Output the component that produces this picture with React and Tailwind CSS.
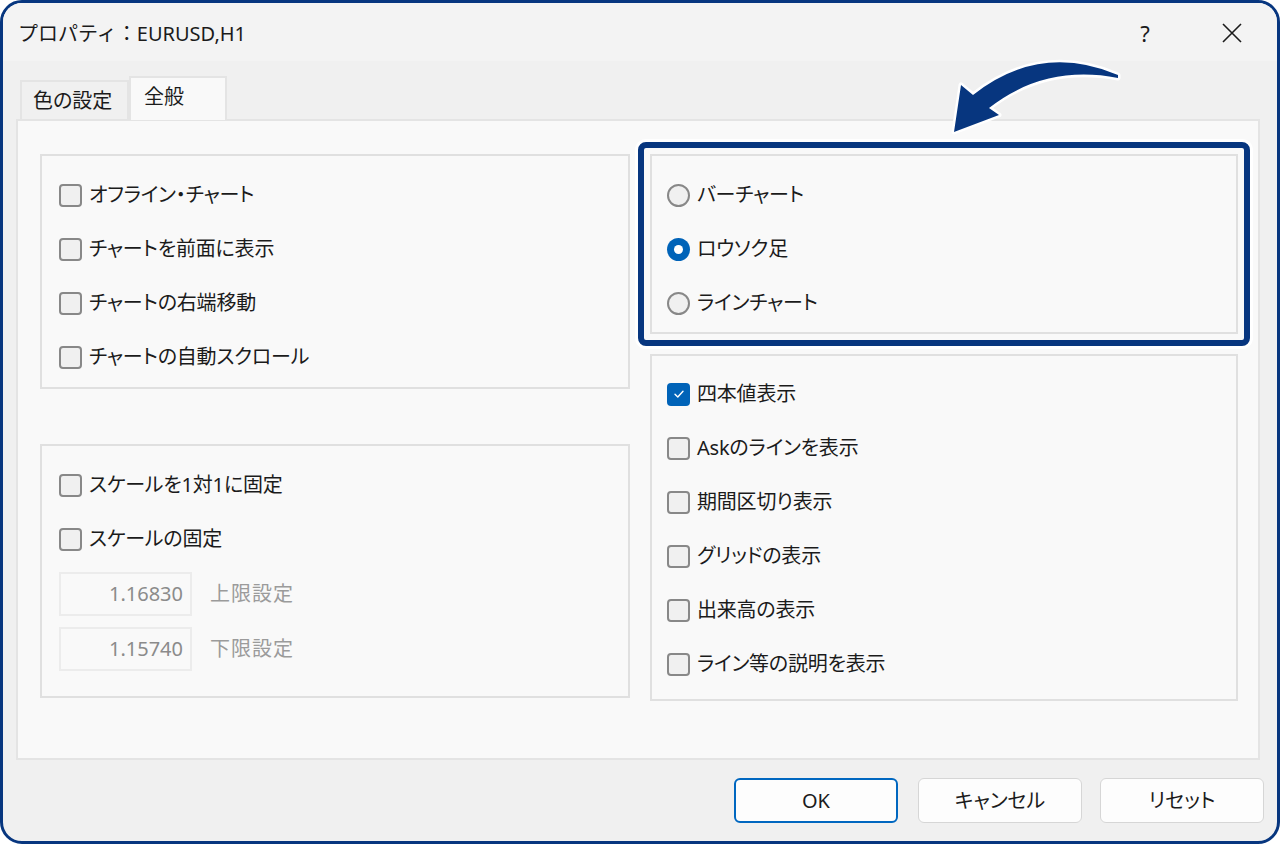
import React from "react";

const FONT = { fontFamily: '"Noto Sans", "Noto Sans CJK JP", sans-serif', fontFeatureSettings: '"palt"' };

function Check({ checked }) {
  if (checked) {
    return (
      <span className="w-[23px] h-[23px] rounded-[4px] bg-[#0063b8] flex items-center justify-center shrink-0">
        <svg width="14" height="14" viewBox="0 0 14 14">
          <path d="M3 7.2 L5.8 10 L11 4.2" fill="none" stroke="#ffffff" strokeWidth="1.4" strokeLinecap="round" strokeLinejoin="round" />
        </svg>
      </span>
    );
  }
  return <span className="w-[23px] h-[23px] rounded-[4px] border-2 border-[#888888] bg-[#f0f0f0] shrink-0" />;
}

function Radio({ checked }) {
  if (checked) {
    return (
      <span className="w-[23px] h-[23px] rounded-full bg-[#0063b8] flex items-center justify-center shrink-0">
        <span className="w-[9px] h-[9px] rounded-full bg-white" />
      </span>
    );
  }
  return <span className="w-[23px] h-[23px] rounded-full border-2 border-[#888888] bg-[#f0f0f0] shrink-0" />;
}

function Row({ children, label }) {
  return (
    <div className="h-[54px] flex items-center gap-[7px]">
      {children}
      <span className="text-[20px] text-[#1b1b1b] leading-none tracking-[-0.2px]">{label}</span>
    </div>
  );
}

function NumBox({ value, label }) {
  return (
    <div className="h-[55px] flex items-center gap-[18px]">
      <div className="w-[133px] h-[44px] border-2 border-[#ececec] bg-[#f9f9f9] flex items-center justify-end pr-[7px] text-[20px] text-[#8b8b8b] leading-none">
        {value}
      </div>
      <span className="text-[20px] text-[#9b9b9b] leading-none tracking-[1px]">{label}</span>
    </div>
  );
}

export default function App() {
  return (
    <div className="w-[1280px] h-[844px] bg-white" style={FONT}>
      <div className="relative w-full h-full border-[3px] border-[#07367f] rounded-[22px] overflow-hidden bg-[#f0f0f0] flex flex-col">
        {/* title bar */}
        <div className="h-[58px] bg-[#f3f3f3] flex items-center pl-[15px] shrink-0">
          <span className="text-[20px] text-[#1b1b1b] leading-none mt-[4px]" style={{ fontFeatureSettings: "normal" }}>
            プロパティ：EURUSD,H1
          </span>
          <div className="ml-auto flex items-center">
            <span className="w-[40px] text-center text-[22px] text-[#1b1b1b] leading-none mt-[2px] mr-[56px]" style={{ fontFamily: '"Noto Sans", sans-serif' }}>?</span>
            <svg width="22" height="22" viewBox="0 0 22 22" className="mr-[34px] mt-[2px]">
              <path d="M2 2 L20 20 M20 2 L2 20" stroke="#1b1b1b" strokeWidth="1.6" />
            </svg>
          </div>
        </div>

        {/* body */}
        <div className="flex-1 flex flex-col pl-[13px] pr-[13px] pt-[15px] pb-[18px]">
          {/* tabs */}
          <div className="flex items-end h-[43px] pl-[4px] relative z-10">
            <div className="h-[39px] w-[109px] border-2 border-b-0 border-[#e4e4e4] bg-[#f0f0f0] flex items-center pl-[11px] text-[20px] text-[#1b1b1b] leading-none">
              色の設定
            </div>
            <div className="h-[44px] w-[98px] -mb-[1px] border-2 border-b-0 border-[#e4e4e4] bg-[#f9f9f9] flex items-start pt-[9px] pl-[13px] text-[20px] text-[#1b1b1b] leading-none">
              全般
            </div>
          </div>
          {/* panel */}
          <div className="h-[641px] mr-[4px] border-2 border-[#e4e4e4] bg-[#f9f9f9] pl-[22px] pt-[33px] flex gap-[20px]">
            {/* left column */}
            <div className="w-[590px] flex flex-col gap-[55px]">
              <div className="h-[235px] border-2 border-[#e0e0e0] pl-[17px] pt-[12px]">
                <Row label="オフライン・チャート"><Check /></Row>
                <Row label="チャートを前面に表示"><Check /></Row>
                <Row label="チャートの右端移動"><Check /></Row>
                <Row label="チャートの自動スクロール"><Check /></Row>
              </div>
              <div className="h-[254px] border-2 border-[#e0e0e0] pl-[17px] pt-[12px]">
                <Row label="スケールを1対1に固定"><Check /></Row>
                <Row label="スケールの固定"><Check /></Row>
                <NumBox value="1.16830" label="上限設定" />
                <NumBox value="1.15740" label="下限設定" />
              </div>
            </div>
            {/* right column */}
            <div className="w-[588px] flex flex-col gap-[20px]">
              <div className="relative h-[180px]">
                <div className="absolute -left-[12px] -top-[12px] -right-[12px] -bottom-[12px] rounded-[8px] border-[6px] border-[#07367f] shadow-[0_0_0_3px_#ffffff]" />
                <div className="h-full border-2 border-[#e0e0e0] pl-[15px] pt-[12px]">
                  <Row label="バーチャート"><Radio /></Row>
                  <Row label="ロウソク足"><Radio checked /></Row>
                  <Row label="ラインチャート"><Radio /></Row>
                </div>
              </div>
              <div className="h-[347px] border-2 border-[#e0e0e0] pl-[15px] pt-[11px]">
                <Row label="四本値表示"><Check checked /></Row>
                <Row label="Askのラインを表示"><Check /></Row>
                <Row label="期間区切り表示"><Check /></Row>
                <Row label="グリッドの表示"><Check /></Row>
                <Row label="出来高の表示"><Check /></Row>
                <Row label="ライン等の説明を表示"><Check /></Row>
              </div>
            </div>
          </div>
          {/* buttons */}
          <div className="mt-auto flex justify-end">
            <button className="w-[164px] h-[45px] rounded-[6px] border-2 border-[#0067c0] bg-[#fdfdfd] text-[20px] text-[#1b1b1b] leading-none">OK</button>
            <button className="ml-[20px] w-[164px] h-[45px] rounded-[6px] border-[1.5px] border-[#d6d6d6] bg-[#fdfdfd] text-[20px] text-[#1b1b1b] leading-none">キャンセル</button>
            <button className="ml-[18px] w-[164px] h-[45px] rounded-[6px] border-[1.5px] border-[#d6d6d6] bg-[#fdfdfd] text-[20px] text-[#1b1b1b] leading-none">リセット</button>
          </div>
        </div>

        {/* arrow */}
        <svg className="absolute left-0 top-0 pointer-events-none" width="1280" height="844" viewBox="3 3 1280 844">
          <path
            d="M1118,75 Q1040,42 973,95 L961,85 L954,132 L999,115 L989,108 Q1045,64 1118,78 Z"
            fill="#07367f"
            stroke="#ffffff"
            strokeWidth="5"
            strokeLinejoin="round"
            style={{ paintOrder: "stroke" }}
          />
        </svg>
      </div>
    </div>
  );
}
